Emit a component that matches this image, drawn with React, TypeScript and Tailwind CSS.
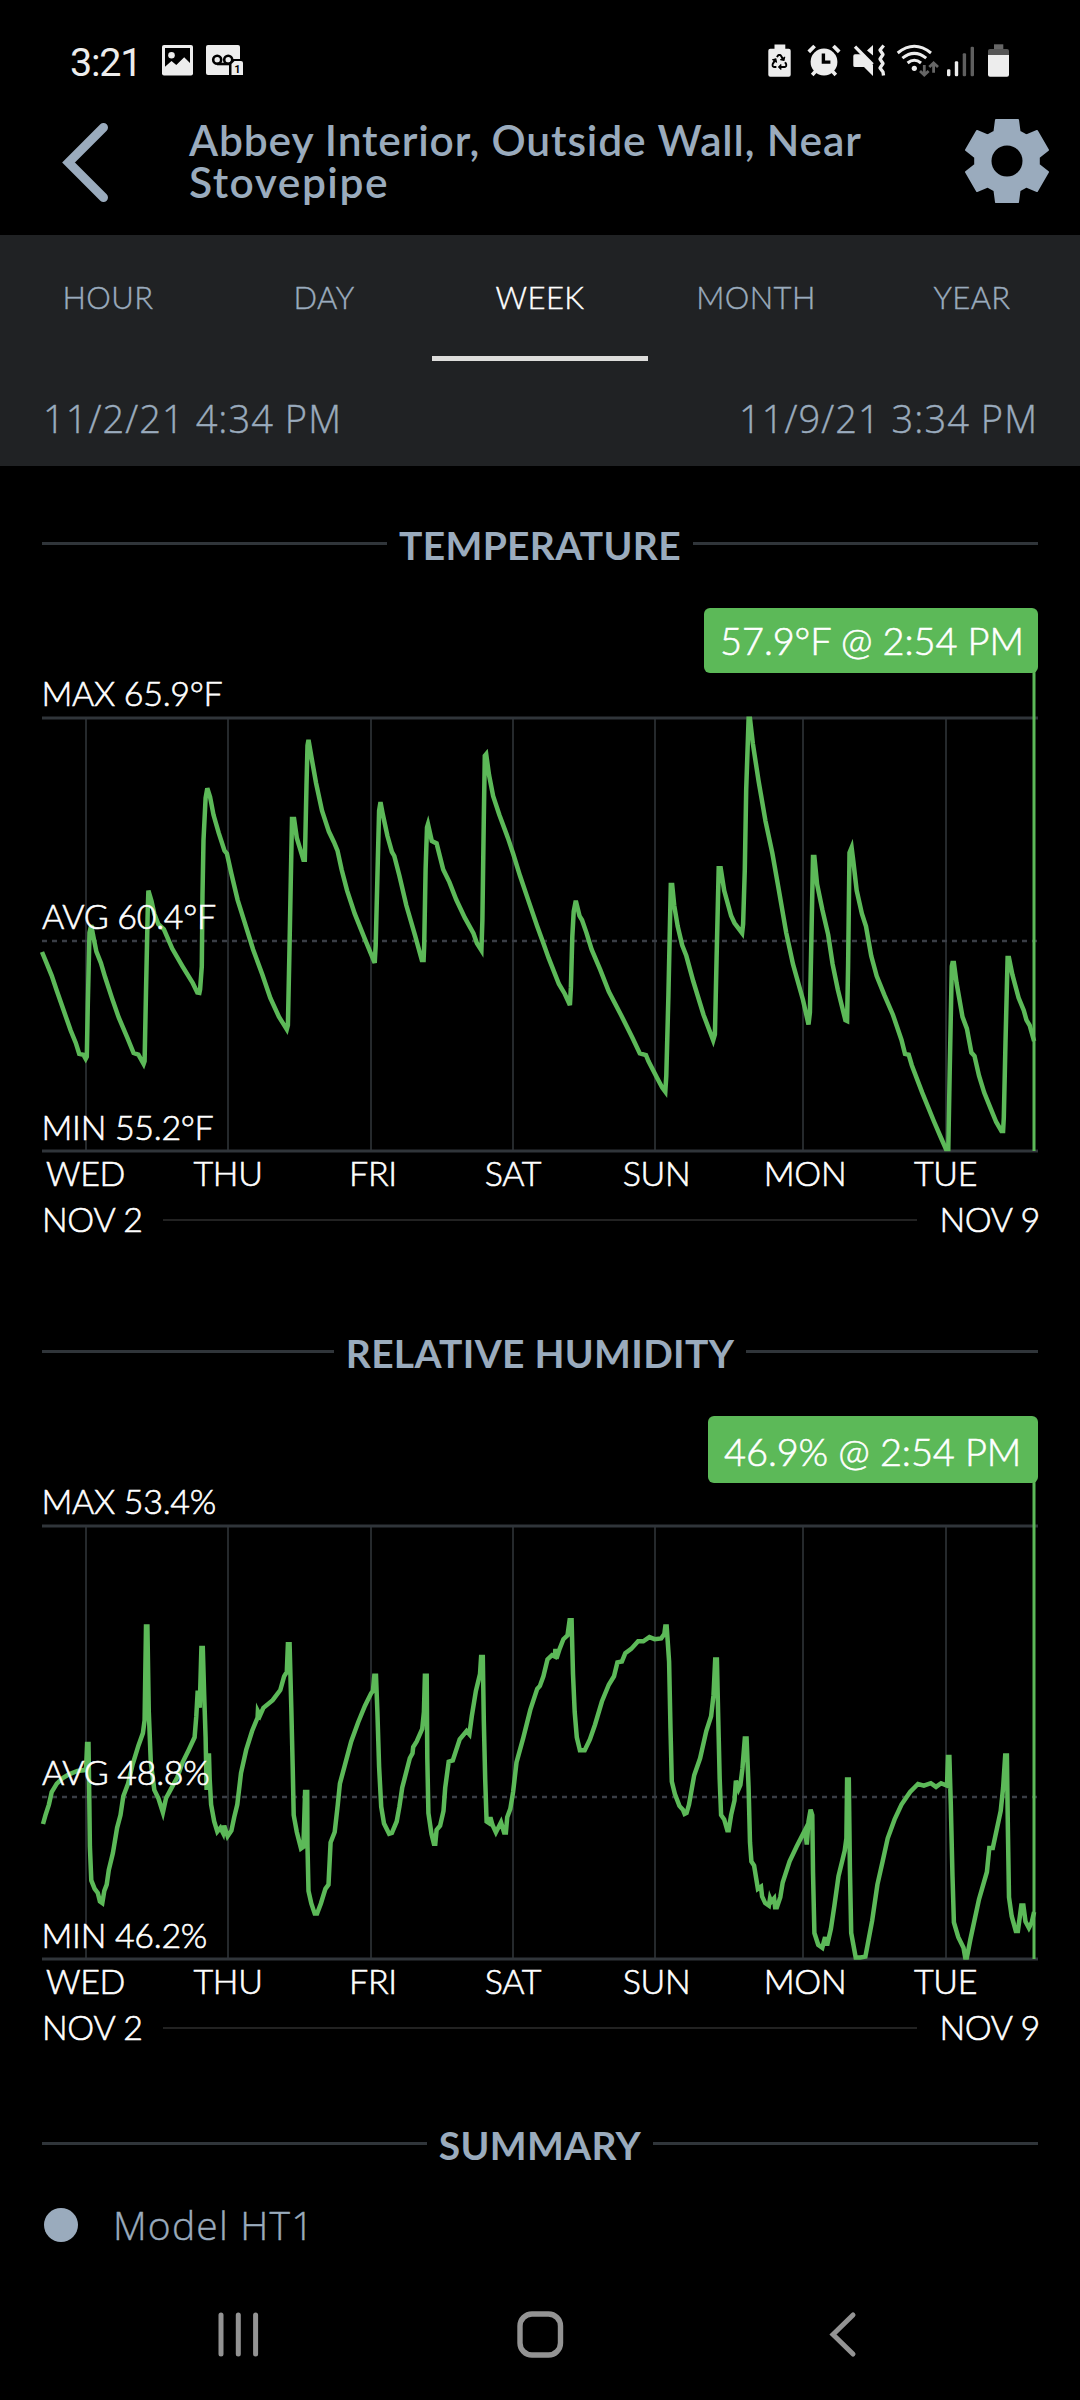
import { FaRecycle } from "react-icons/fa";

type Point = [number, number];

interface Sensor {
  title: string;
  badge: string;
  max: string;
  avg: string;
  min: string;
  avgY: number;
  trace: Point[];
}

const TABS = ["HOUR", "DAY", "WEEK", "MONTH", "YEAR"];

// x = grid line, start/end = extent of the label under it
const DAYS = [
  { label: "WED", x: 86, start: 47, end: 124 },
  { label: "THU", x: 228, start: 194, end: 262 },
  { label: "FRI", x: 371, start: 349, end: 397 },
  { label: "SAT", x: 513, start: 483, end: 543 },
  { label: "SUN", x: 655, start: 622, end: 691 },
  { label: "MON", x: 803, start: 763, end: 847 },
  { label: "TUE", x: 946, start: 913, end: 978 },
];

// Samples: x in 0..3003 across the week, y in 0..1030 from max down to min
const TEMPERATURE: Point[] = [
  [122, 556], [135, 582], [150, 612], [165, 648], [185, 695], [205, 742], [220, 772], [230, 798],
  [242, 800], [249, 810], [252, 805], [255, 680], [260, 510], [265, 492], [270, 515], [280, 555],
  [293, 582], [305, 615], [325, 665], [345, 712], [370, 760], [388, 796], [402, 800], [417, 822],
  [420, 815], [424, 650], [429, 460], [431, 410], [440, 435], [448, 465], [460, 490], [476, 502],
  [500, 548], [530, 590], [560, 630], [573, 652], [579, 653], [581, 645], [586, 590], [588, 420],
  [591, 290], [597, 190], [602, 167], [610, 188], [620, 230], [635, 273], [652, 315], [659, 322],
  [672, 370], [690, 432], [712, 490], [735, 550], [762, 610], [785, 665], [810, 710], [833, 740],
  [836, 730], [840, 570], [845, 360], [848, 240], [854, 240], [862, 285], [881, 337], [885, 337],
  [887, 280], [890, 160], [893, 65], [896, 52], [905, 95], [918, 155], [935, 220], [955, 270],
  [970, 295], [980, 315], [992, 360], [1008, 410], [1030, 465], [1058, 522], [1088, 582], [1091, 540],
  [1097, 340], [1101, 220], [1105, 200], [1112, 230], [1125, 280], [1138, 318], [1145, 328], [1160, 375],
  [1180, 445], [1205, 515], [1225, 575], [1230, 575], [1232, 540], [1236, 360], [1240, 260], [1243, 252],
  [1254, 292], [1268, 298], [1287, 360], [1305, 390], [1325, 432], [1350, 475], [1375, 512], [1385, 535],
  [1398, 552], [1401, 480], [1405, 240], [1408, 90], [1412, 86], [1420, 135], [1432, 185], [1450, 230],
  [1475, 285], [1490, 322], [1510, 375], [1535, 435], [1560, 495], [1580, 540], [1593, 570], [1623, 632],
  [1640, 655], [1655, 682], [1658, 640], [1662, 520], [1666, 460], [1672, 434], [1683, 470], [1690, 480],
  [1703, 510], [1718, 550], [1743, 598], [1768, 650], [1803, 705], [1838, 762], [1858, 797], [1876, 801],
  [1883, 815], [1908, 855], [1923, 878], [1932, 888], [1935, 850], [1941, 660], [1948, 397], [1952, 397],
  [1958, 445], [1968, 495], [1981, 540], [1993, 565], [2013, 625], [2043, 705], [2071, 766], [2076, 752],
  [2081, 570], [2087, 357], [2093, 357], [2103, 410], [2123, 470], [2133, 487], [2155, 511], [2158, 490],
  [2163, 360], [2167, 170], [2174, 2], [2178, 2], [2186, 60], [2203, 150], [2223, 245], [2243, 322],
  [2260, 400], [2283, 510], [2303, 585], [2332, 670], [2348, 728], [2352, 700], [2357, 500], [2361, 330],
  [2365, 330], [2373, 395], [2388, 455], [2405, 515], [2418, 585], [2433, 645], [2455, 718], [2460, 720],
  [2463, 590], [2467, 320], [2473, 308], [2478, 340], [2488, 410], [2503, 465], [2515, 495], [2530, 565],
  [2546, 613], [2568, 658], [2593, 705], [2618, 765], [2628, 798], [2639, 800], [2648, 825], [2678, 890],
  [2713, 960], [2733, 998], [2747, 1024], [2754, 1024], [2758, 840], [2764, 590], [2766, 582], [2770, 582],
  [2778, 630], [2795, 710], [2808, 738], [2821, 795], [2830, 803], [2843, 850], [2858, 890], [2878, 930],
  [2893, 960], [2908, 981], [2913, 981], [2915, 950], [2920, 770], [2926, 570], [2930, 570], [2940, 610],
  [2958, 665], [2973, 695], [2981, 718], [2990, 730], [3003, 768],
];

const HUMIDITY: Point[] = [
  [125, 708], [132, 687], [142, 662], [150, 632], [165, 612], [182, 599], [200, 590], [225, 582],
  [246, 580], [250, 574], [253, 518], [257, 518], [259, 632], [261, 762], [265, 842], [275, 862],
  [284, 872], [290, 892], [297, 896], [303, 867], [310, 852], [316, 817], [328, 777], [340, 717],
  [350, 687], [358, 642], [372, 612], [385, 567], [402, 522], [415, 492], [420, 462], [424, 239],
  [428, 239], [432, 442], [438, 562], [448, 627], [460, 647], [473, 681], [482, 647], [495, 627],
  [515, 597], [530, 562], [548, 532], [565, 502], [570, 452], [574, 391], [580, 432], [585, 290],
  [589, 290], [593, 402], [597, 502], [600, 627], [602, 545], [607, 545], [609, 602], [613, 662],
  [622, 702], [631, 726], [640, 717], [648, 730], [651, 712], [661, 737], [672, 724], [680, 692],
  [689, 662], [700, 587], [715, 532], [732, 487], [748, 455], [749, 440], [755, 450], [765, 432],
  [792, 414], [814, 390], [825, 357], [833, 347], [836, 281], [841, 281], [846, 432], [850, 572],
  [853, 687], [862, 727], [874, 766], [881, 762], [886, 632], [892, 632], [893, 762], [896, 867],
  [904, 897], [914, 921], [921, 921], [932, 897], [945, 862], [954, 852], [960, 752], [972, 727],
  [981, 662], [987, 612], [1002, 567], [1020, 512], [1040, 467], [1060, 427], [1078, 397], [1083, 392],
  [1087, 356], [1092, 356], [1096, 442], [1101, 572], [1107, 667], [1115, 707], [1130, 731], [1138, 729],
  [1152, 702], [1160, 667], [1168, 622], [1190, 552], [1198, 540], [1200, 525], [1210, 512], [1226, 482],
  [1231, 442], [1234, 356], [1239, 356], [1241, 552], [1244, 682], [1253, 732], [1260, 755], [1264, 755],
  [1268, 722], [1278, 712], [1288, 677], [1293, 622], [1303, 560], [1315, 557], [1335, 507], [1355, 487],
  [1363, 495], [1370, 452], [1382, 392], [1394, 352], [1397, 311], [1402, 311], [1405, 462], [1409, 602],
  [1413, 702], [1420, 706], [1424, 692], [1430, 710], [1440, 728], [1455, 704], [1464, 728], [1469, 728],
  [1473, 692], [1482, 672], [1490, 632], [1500, 562], [1520, 502], [1540, 437], [1560, 387], [1568, 380],
  [1578, 357], [1590, 317], [1603, 307], [1611, 310], [1613, 292], [1616, 315], [1625, 292], [1636, 269],
  [1648, 260], [1654, 224], [1660, 224], [1664, 352], [1669, 442], [1675, 502], [1684, 533], [1698, 533],
  [1713, 507], [1728, 472], [1748, 417], [1768, 377], [1783, 357], [1793, 324], [1806, 322], [1816, 302],
  [1833, 292], [1853, 274], [1868, 274], [1886, 264], [1901, 269], [1920, 267], [1929, 257], [1932, 239],
  [1936, 239], [1943, 322], [1947, 482], [1951, 607], [1960, 637], [1973, 665], [1983, 674], [1988, 684],
  [1994, 682], [2001, 662], [2016, 592], [2033, 552], [2051, 487], [2065, 452], [2072, 402], [2077, 317],
  [2082, 317], [2086, 462], [2090, 602], [2094, 687], [2103, 697], [2112, 723], [2116, 723], [2123, 687],
  [2133, 652], [2137, 605], [2145, 625], [2150, 615], [2156, 577], [2163, 505], [2168, 505], [2174, 622],
  [2178, 752], [2182, 797], [2190, 807], [2201, 862], [2210, 857], [2213, 880], [2222, 896], [2233, 902],
  [2236, 885], [2240, 893], [2248, 885], [2251, 906], [2256, 906], [2266, 882], [2273, 847], [2293, 797],
  [2313, 762], [2338, 722], [2343, 757], [2348, 702], [2354, 674], [2359, 687], [2361, 822], [2365, 967],
  [2376, 995], [2388, 1002], [2396, 977], [2402, 997], [2413, 957], [2423, 902], [2435, 832], [2453, 772],
  [2458, 742], [2460, 602], [2465, 602], [2468, 812], [2472, 967], [2485, 1025], [2498, 1025], [2513, 1023],
  [2533, 937], [2548, 852], [2563, 797], [2578, 742], [2598, 697], [2618, 662], [2643, 632], [2666, 613],
  [2683, 617], [2703, 611], [2718, 620], [2733, 611], [2750, 617], [2753, 549], [2757, 549], [2761, 662],
  [2766, 832], [2770, 942], [2783, 977], [2798, 1002], [2803, 1025], [2808, 1025], [2818, 982], [2843, 887],
  [2866, 822], [2873, 765], [2883, 765], [2906, 677], [2913, 622], [2919, 545], [2924, 545], [2927, 722],
  [2930, 882], [2938, 927], [2950, 962], [2956, 962], [2966, 902], [2972, 902], [2978, 940], [2988, 955],
  [2996, 942], [3003, 917],
];

const SENSORS: Sensor[] = [
  {
    title: "TEMPERATURE",
    badge: "57.9°F @ 2:54 PM",
    max: "MAX 65.9°F",
    avg: "AVG 60.4°F",
    min: "MIN 55.2°F",
    avgY: 333,
    trace: TEMPERATURE,
  },
  {
    title: "RELATIVE HUMIDITY",
    badge: "46.9% @ 2:54 PM",
    max: "MAX 53.4%",
    avg: "AVG 48.8%",
    min: "MIN 46.2%",
    avgY: 381,
    trace: HUMIDITY,
  },
];

const TOP = 110;
const BOTTOM = 543;

function toPoints(trace: Point[]) {
  return trace
    .map(([x, y]) => `${(x / 2.904).toFixed(1)},${(TOP + y / 2.376).toFixed(1)}`)
    .join(" ");
}

function gearPoints() {
  const tooth: Point[] = [[-12.5, -29.5], [-11, -41], [11, -41], [12.5, -29.5]];
  const points: string[] = [];
  for (let i = 0; i < 6; i++) {
    const a = (i * Math.PI) / 3;
    tooth.forEach(([x, y]) => {
      const px = 42 + x * Math.cos(a) - y * Math.sin(a);
      const py = 43 + x * Math.sin(a) + y * Math.cos(a);
      points.push(`${px.toFixed(1)},${py.toFixed(1)}`);
    });
  }
  return points.join(" ");
}

function StatusBar() {
  return (
    <div className="flex h-[90px] shrink-0 items-start pt-[44px] pr-[70px] pl-[70px] text-[#ededed]">
      <div className="w-[92px] pt-[2px] font-[Roboto,sans-serif] text-[39.5px] leading-[34px] font-normal tracking-[-1.2px]">
        3:21
      </div>

      {/* Notifications */}
      <svg width="31" height="34" fill="currentColor">
        <rect y="1" width="31" height="30.5" rx="2" />
        <path d="M3 4H28V19L22.2 13.3L14.3 21L9.5 17L3 22.7Z" fill="#000" />
        <circle cx="9.5" cy="11.3" r="3.3" />
      </svg>
      <svg width="38" height="34" fill="currentColor" className="ml-[13px]">
        <rect y="1" width="34" height="30" rx="2" />
        <g fill="none" stroke="#000" strokeWidth="2.6">
          <circle cx="11.2" cy="15.8" r="4" />
          <circle cx="22.2" cy="15.8" r="4" />
          <path d="M11 20H24" />
        </g>
        <path d="M23 34V19L27 15H38V34Z" fill="#000" />
        <path d="M25.5 31V20L28.5 17H35Q37 17 37 19V31Z" />
        <text x="28.2" y="28.6" fontSize="11" fontWeight="700" fontFamily="Roboto, sans-serif" fill="#000">
          1
        </text>
      </svg>

      {/* System icons */}
      <svg width="24" height="34" fill="currentColor" className="ml-auto">
        <path d="M6.5 0.5H17.3V4.7H20.7Q22.7 4.7 22.7 6.7V30.7Q22.7 32.7 20.7 32.7H2.3Q0.3 32.7 0.3 30.7V6.7Q0.3 4.7 2.3 4.7H6.5Z" />
        <FaRecycle x="3.4" y="10" width="16" height="16" color="#000" />
      </svg>
      <svg width="34" height="34" className="ml-[15px]" fill="none" stroke="currentColor">
        <circle cx="17" cy="18" r="13.4" fill="currentColor" stroke="none" />
        <path d="M1.8 7.8L7.6 2M32.2 7.8L26.4 2" strokeWidth="3.8" />
        <path d="M5.2 31L9 26.8M28.8 31L25 26.8" strokeWidth="3.6" />
        <path d="M16.4 9.4V18.1H23.4" stroke="#000" strokeWidth="3.4" />
      </svg>
      <svg width="34" height="34" className="ml-[11px]" fill="currentColor">
        <path d="M1.3 12Q1.3 10.3 3 10.3H9.5L21 21V32L12 23H3Q1.3 23 1.3 21.5Z" />
        <path d="M21 1V11.5L15 6.5Z" />
        <g fill="none" stroke="currentColor" strokeWidth="3.3">
          <path d="M3 2.7L20.5 20.5" />
          <path d="M31.7 1.5L28 6L31 10.5L28 15L31 19.5L28 24L31 28L31.5 31.5" strokeLinejoin="round" />
        </g>
      </svg>
      <svg width="43" height="34" className="ml-[10px]" fill="none" stroke="currentColor" strokeWidth="3">
        <path d="M1.7 9Q18.3 -4.5 35 9" />
        <path d="M6.4 14.2Q18.3 4.6 30.2 14.2" />
        <path d="M11.6 19Q18.3 13.4 25 19" />
        <circle cx="18.3" cy="24.3" r="2.6" fill="currentColor" stroke="none" />
        <path d="M28.3 21V31M24 27L28.3 31L32.6 27M37.6 28.7V19M33.3 23L37.6 19L42 23" stroke="#666" strokeWidth="2.8" />
      </svg>
      <svg width="29" height="34" className="ml-[7px]" fill="currentColor">
        <rect x="1" y="25.3" width="3.4" height="7" rx="1.2" />
        <rect x="8.8" y="17.3" width="3.4" height="15" rx="1.2" />
        <rect x="16.7" y="9.3" width="3.4" height="23" rx="1.2" fill="#5f5f5f" />
        <rect x="24.6" y="2.7" width="3.4" height="29.6" rx="1.2" fill="#5f5f5f" />
      </svg>
      <svg width="23" height="34" className="ml-[12px]" fill="currentColor">
        <rect x="7" y="0.3" width="9.3" height="5" fill="#666" />
        <path d="M1 11V7Q1 5 3 5H20Q22 5 22 7V11Z" fill="#555" />
        <path d="M1 11H22V30.7Q22 32.7 20 32.7H3Q1 32.7 1 30.7Z" />
      </svg>
    </div>
  );
}

function Header() {
  return (
    <header className="flex h-[145px] shrink-0 items-center pb-[3px] pr-[31px] pl-[60px] text-[#9aabbd]">
      <svg width="52" height="84" className="mt-[2px]" fill="none" stroke="currentColor" strokeWidth="9">
        <path d="M43.5 7.5L8.5 42.5L43.5 77.5" strokeLinecap="round" />
      </svg>
      <h1 className="ml-[77px] w-[720px] text-[42.5px] leading-[42px] font-semibold tracking-[0.85px]">
        Abbey Interior, Outside Wall, Near <span className="tracking-[1.5px]">Stovepipe</span>
      </h1>
      <svg width="84" height="86" className="ml-auto" fill="currentColor">
        <polygon points={gearPoints()} stroke="currentColor" strokeWidth="2" strokeLinejoin="round" />
        <circle cx="42" cy="43" r="15.5" fill="#000" />
      </svg>
    </header>
  );
}

function RangePicker() {
  return (
    <div className="h-[231px] shrink-0 bg-[#202224] text-[#9aabbd]">
      <div className="grid grid-cols-5">
        {TABS.map((tab) => (
          <button
            key={tab}
            className={`h-[126px] border-b-5 pt-[3px] text-[31px] tracking-[0.4px] [-webkit-text-stroke:0.4px] ${
              tab === "WEEK" ? "border-[#dddddb] text-white" : "border-transparent"
            }`}
          >
            {tab}
          </button>
        ))}
      </div>
      <div className="flex h-[105px] items-center justify-between pt-[9px] pr-[42px] pl-[43px] font-['Open_Sans',sans-serif] text-[38px] tracking-[1.05px] [-webkit-text-stroke:0.4px]">
        <span>11/2/21 4:34 PM</span>
        <span>11/9/21 3:34 PM</span>
      </div>
    </div>
  );
}

function SectionTitle({ title }: { title: string }) {
  return (
    <div className="flex h-[142px] shrink-0 items-center gap-[12px] px-[42px] pt-[13px]">
      <div className="h-[3px] flex-1 bg-[#30353a]" />
      <h2 className="pt-[3px] text-[39px] leading-none font-bold tracking-[0.3px] text-[#9aabbd]">
        {title}
      </h2>
      <div className="h-[3px] flex-1 bg-[#30353a]" />
    </div>
  );
}

function Chart({ sensor, badgeClass }: { sensor: Sensor; badgeClass: string }) {
  return (
    <div className="relative">
      <svg width="1080" height="590" className="block">
        {DAYS.map((day) => (
          <line key={day.label} x1={day.x} x2={day.x} y1={TOP} y2={BOTTOM} stroke="#25292c" strokeWidth="2" />
        ))}
        <line x1="42" x2="1038" y1={TOP} y2={TOP} stroke="#30353a" strokeWidth="3" />
        <line x1="42" x2="1038" y1={BOTTOM} y2={BOTTOM} stroke="#30353a" strokeWidth="3" />
        <line
          x1="42"
          x2="1038"
          y1={sensor.avgY}
          y2={sensor.avgY}
          stroke="#3a3e46"
          strokeWidth="2.5"
          strokeDasharray="5 5"
        />
        <polyline points={toPoints(sensor.trace)} fill="none" stroke="#5cb958" strokeWidth="4.5" />
        <line x1="1034" x2="1034" y1="60" y2={BOTTOM} stroke="#5cb958" strokeWidth="3" />
        <g fill="#fff" stroke="#fff" strokeWidth="0.6" fontSize="34" letterSpacing="-0.3">
          <text x="41.5" y="98">{sensor.max}</text>
          <text x="42" y={sensor.avgY - 12}>{sensor.avg}</text>
          <text x="41.5" y="532">{sensor.min}</text>
          {DAYS.map((day) => (
            <text key={day.label} x={(day.start + day.end) / 2} y="577.5" textAnchor="middle">
              {day.label}
            </text>
          ))}
        </g>
      </svg>
      {/* Selected sample */}
      <div
        className={`absolute top-0 right-[42px] flex items-center rounded-[6px] bg-[#5cb958] pr-[14px] pl-[16px] text-[38px] tracking-[-0.1px] text-white [-webkit-text-stroke:0.6px] ${badgeClass}`}
      >
        {sensor.badge}
      </div>
    </div>
  );
}

function NavBar() {
  return (
    <nav className="mt-auto flex h-[132px] shrink-0 items-center justify-center gap-[254px] text-[#939393]">
      <svg width="48" height="48" fill="none" stroke="currentColor" strokeWidth="5" strokeLinecap="round">
        <path d="M7 5V44M24.3 5V44M41.6 5V44" />
      </svg>
      <svg width="48" height="48" fill="none" stroke="currentColor" strokeWidth="5.4">
        <rect x="4" y="4" width="40.5" height="41" rx="12" />
      </svg>
      <svg width="48" height="48" fill="none" stroke="currentColor" strokeWidth="5" strokeLinecap="round">
        <path d="M35 5L15 24.5L35 44" />
      </svg>
    </nav>
  );
}

export default function App() {
  return (
    <div className="flex h-[2400px] w-[1080px] flex-col overflow-hidden bg-black font-[Lato,sans-serif] font-light">
      <StatusBar />
      <Header />
      <RangePicker />

      {SENSORS.map((sensor, i) => (
        <section key={sensor.title} className={i === 0 ? "h-[808px] shrink-0" : "h-[792px] shrink-0"}>
          <SectionTitle title={sensor.title} />
          <Chart sensor={sensor} badgeClass={i === 0 ? "h-[65px] w-[334px]" : "h-[67px] w-[330px] pt-[3px]"} />
          <div className="flex h-[40px] items-center gap-[20px] pr-[40px] pl-[42px] text-[34px] tracking-[-0.3px] text-white [-webkit-text-stroke:0.6px]">
            <span>NOV 2</span>
            <div className="mt-[3px] mr-[2px] h-[2px] flex-1 bg-[#222]" />
            <span>NOV 9</span>
          </div>
        </section>
      ))}

      <section className="shrink-0">
        <SectionTitle title="SUMMARY" />
        <div className="flex h-[34px] items-center gap-[35px] pl-[44px] text-[#9aabbd]">
          <div className="size-[34px] rounded-full bg-[#9aabbd]" />
          <span className="font-['Open_Sans',sans-serif] text-[39px] tracking-[1.2px] [-webkit-text-stroke:0.4px]">
            Model HT1
          </span>
        </div>
      </section>

      <NavBar />
    </div>
  );
}
